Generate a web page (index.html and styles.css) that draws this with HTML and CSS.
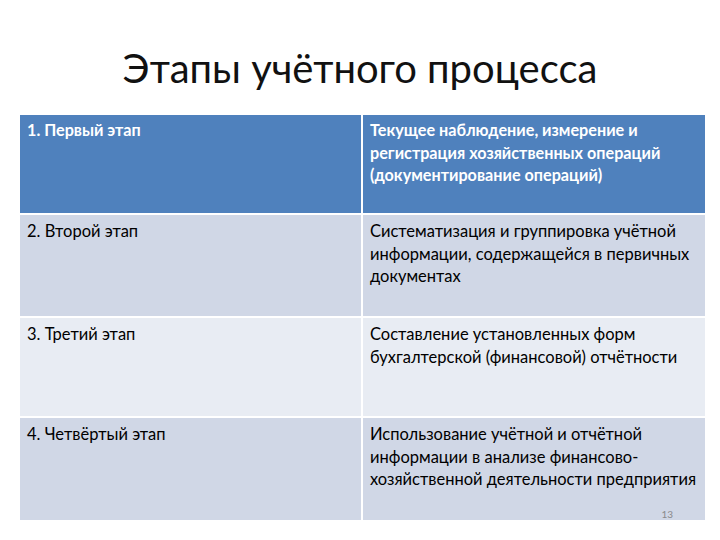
FILE: index.html
```html
<!DOCTYPE html>
<html lang="ru">
<head>
<meta charset="utf-8">
<link rel="stylesheet" href="styles.css">
</head>
<body>
<div class="slide">
  <h1 class="title">Этапы учётного процесса</h1>
  <div class="table">
    <div class="cell head">1. Первый этап</div>
    <div class="cell head">Текущее наблюдение, измерение и регистрация хозяйственных операций (документирование операций)</div>
    <div class="cell odd">2. Второй этап</div>
    <div class="cell odd">Систематизация и группировка учётной информации, содержащейся в первичных документах</div>
    <div class="cell even">3. Третий этап</div>
    <div class="cell even">Составление установленных форм бухгалтерской (финансовой) отчётности</div>
    <div class="cell odd">4. Четвёртый этап</div>
    <div class="cell odd last">Использование учётной и отчётной информации в анализе финансово-хозяйственной деятельности предприятия<span class="pagenum">13</span></div>
  </div>
</div>
</body>
</html>
```
FILE: styles.css
```css
html, body {
  margin: 0;
  padding: 0;
  background: #ffffff;
}
.slide {
  width: 720px;
  height: 540px;
  font-family: Lato, "Open Sans", sans-serif;
  color: #000;
}
.title {
  margin: 0;
  height: 115px;
  box-sizing: border-box;
  padding-top: 44px;
  text-align: center;
  font-weight: 400;
  font-size: 40px;
  line-height: 48px;
  color: #111;
}
.table {
  margin-left: 20px;
  width: 685px;
  display: grid;
  grid-template-columns: 341px 342px;
  grid-template-rows: 98px 101px 98px 102px;
  column-gap: 2px;
  row-gap: 2px;
}
.cell {
  padding: 5px 3px 0 7px;
  font-size: 16.5px;
  line-height: 22.5px;
}
.head {
  background: #4f81bd;
  color: #fff;
  font-weight: 700;
  font-size: 16.2px;
  padding-top: 4px;
}
.odd {
  background: #d0d7e6;
}
.even {
  background: #e8ecf3;
}
.last {
  position: relative;
}
.pagenum {
  position: absolute;
  right: 32px;
  bottom: 0;
  font-size: 10px;
  line-height: 12px;
  color: #8a8a8a;
}
```
